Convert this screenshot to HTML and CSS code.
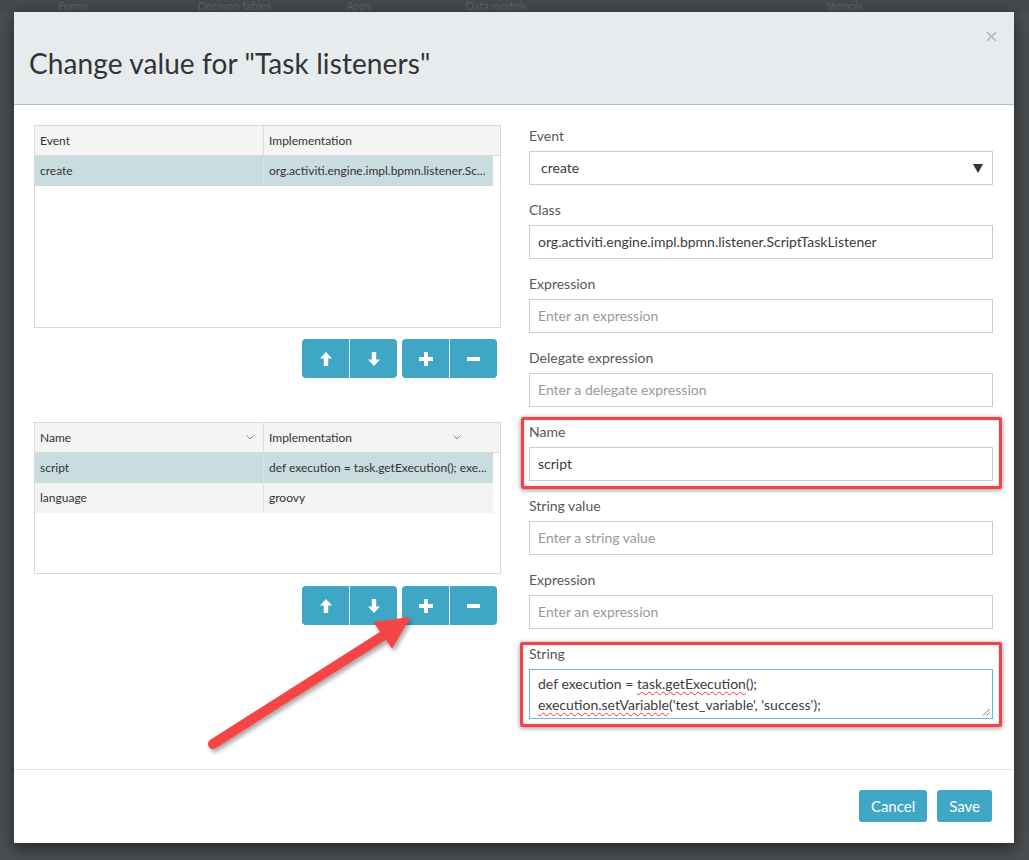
FILE: index.html
```html
<!DOCTYPE html>
<html>
<head>
<meta charset="utf-8">
<link rel="stylesheet" href="styles.css">
</head>
<body>
<div class="app">
  <nav class="topnav">
    <span class="nav-item nav-forms">Forms</span>
    <span class="nav-item nav-dec">Decision tables</span>
    <span class="nav-item nav-apps">Apps</span>
    <span class="nav-item nav-data">Data models</span>
    <span class="nav-item nav-sten">Stencils</span>
  </nav>
</div>

<div class="modal">
  <header class="modal-header">
    <h1 class="modal-title">Change value for "Task listeners"</h1>
    <svg class="close" width="11" height="11" viewBox="0 0 11 11"><path d="M1 1 L10 10 M10 1 L1 10" stroke="#b3b7ba" stroke-width="1.6" fill="none"/></svg>
  </header>

  <div class="modal-body">
    <div class="col-left">
      <div class="grid grid-top">
        <div class="grid-head">
          <div class="cell c1">Event</div>
          <div class="cell c2">Implementation</div>
        </div>
        <div class="grid-rows">
          <div class="grid-row selected">
            <div class="cell c1">create</div>
            <div class="cell c2">org.activiti.engine.impl.bpmn.listener.Sc...</div>
          </div>
        </div>
      </div>
      <div class="btn-row">
        <div class="btn-group">
          <button class="btn-icon"><svg width="12" height="14" viewBox="0 0 12 14"><path d="M6 0 L12 6.5 H8.2 V14 H3.8 V6.5 H0 Z" fill="#fff"/></svg></button>
          <button class="btn-icon"><svg width="12" height="14" viewBox="0 0 12 14"><path d="M6 14 L12 7.5 H8.2 V0 H3.8 V7.5 H0 Z" fill="#fff"/></svg></button>
        </div>
        <div class="btn-group">
          <button class="btn-icon"><svg width="14" height="14" viewBox="0 0 14 14"><path d="M5 0 H9 V5 H14 V9 H9 V14 H5 V9 H0 V5 H5 Z" fill="#fff"/></svg></button>
          <button class="btn-icon"><svg width="13" height="4" viewBox="0 0 13 4"><rect width="13" height="4" fill="#fff"/></svg></button>
        </div>
      </div>

      <div class="grid grid-bottom">
        <div class="grid-head">
          <div class="cell c1">Name<svg class="chev" width="8" height="5" viewBox="0 0 8 5"><path d="M0.5 0.5 L4 4 L7.5 0.5" stroke="#8a8a8a" fill="none"/></svg></div>
          <div class="cell c2">Implementation<svg class="chev chev2" width="8" height="5" viewBox="0 0 8 5"><path d="M0.5 0.5 L4 4 L7.5 0.5" stroke="#8a8a8a" fill="none"/></svg></div>
        </div>
        <div class="grid-rows">
          <div class="grid-row selected">
            <div class="cell c1">script</div>
            <div class="cell c2">def execution = task.getExecution(); exe...</div>
          </div>
          <div class="grid-row alt">
            <div class="cell c1">language</div>
            <div class="cell c2">groovy</div>
          </div>
        </div>
      </div>
      <div class="btn-row">
        <div class="btn-group">
          <button class="btn-icon"><svg width="12" height="14" viewBox="0 0 12 14"><path d="M6 0 L12 6.5 H8.2 V14 H3.8 V6.5 H0 Z" fill="#fff"/></svg></button>
          <button class="btn-icon"><svg width="12" height="14" viewBox="0 0 12 14"><path d="M6 14 L12 7.5 H8.2 V0 H3.8 V7.5 H0 Z" fill="#fff"/></svg></button>
        </div>
        <div class="btn-group">
          <button class="btn-icon"><svg width="14" height="14" viewBox="0 0 14 14"><path d="M5 0 H9 V5 H14 V9 H9 V14 H5 V9 H0 V5 H5 Z" fill="#fff"/></svg></button>
          <button class="btn-icon"><svg width="13" height="4" viewBox="0 0 13 4"><rect width="13" height="4" fill="#fff"/></svg></button>
        </div>
      </div>
    </div>

    <div class="col-right">
      <div class="field">
        <label class="label">Event</label>
        <div class="input select"><span>create</span><svg width="10" height="9" viewBox="0 0 10 9"><path d="M0 0 H10 L5 9 Z" fill="#333"/></svg></div>
      </div>
      <div class="field">
        <label class="label">Class</label>
        <div class="input">org.activiti.engine.impl.bpmn.listener.ScriptTaskListener</div>
      </div>
      <div class="field">
        <label class="label">Expression</label>
        <div class="input placeholder">Enter an expression</div>
      </div>
      <div class="field">
        <label class="label">Delegate expression</label>
        <div class="input placeholder">Enter a delegate expression</div>
      </div>
      <div class="field mark mark-name">
        <label class="label">Name</label>
        <div class="input">script</div>
      </div>
      <div class="field">
        <label class="label">String value</label>
        <div class="input placeholder">Enter a string value</div>
      </div>
      <div class="field">
        <label class="label">Expression</label>
        <div class="input placeholder">Enter an expression</div>
      </div>
      <div class="field mark mark-string">
        <label class="label">String</label>
        <div class="textarea">
          <div>def execution = <span class="spell">task.getExecution</span>();</div>
          <div><span class="spell">execution.setVariable</span>('test_variable', 'success');</div>
          <svg class="grip" width="8" height="8" viewBox="0 0 8 8"><path d="M7.5 1 L1 7.5 M7.5 4.5 L4.5 7.5" stroke="#777" stroke-width="1" fill="none"/></svg>
        </div>
      </div>
    </div>
  </div>

  <footer class="modal-footer">
    <button class="btn">Cancel</button>
    <button class="btn">Save</button>
  </footer>
</div>

<svg class="arrow" width="1029" height="860" viewBox="0 0 1029 860">
  <defs>
    <filter id="sh" x="-20%" y="-20%" width="140%" height="140%">
      <feDropShadow dx="2" dy="3" stdDeviation="2" flood-color="#000" flood-opacity="0.35"/>
    </filter>
  </defs>
  <g filter="url(#sh)">
    <line x1="213" y1="744" x2="386" y2="634" stroke="#f44546" stroke-width="10" stroke-linecap="round"/>
    <path d="M409 618 L375 623 L392 647 Z" fill="#f44546" stroke="#f44546" stroke-width="2" stroke-linejoin="round"/>
  </g>
</svg>
</body>
</html>
```

FILE: styles.css
```css
* { box-sizing: border-box; }

html, body {
  margin: 0;
  padding: 0;
  width: 1029px;
  height: 860px;
  overflow: hidden;
}

body {
  background: #4a4d4f;
  font-family: Lato, "Open Sans", sans-serif;
  color: #333;
  position: relative;
}

.app {
  height: 860px;
  background: #4b4e50;
}

.topnav {
  height: 12px;
  display: flex;
  align-items: center;
  background: #44494b;
  font-size: 11px;
  color: #5c6164;
  line-height: 12px;
}

.nav-item { display: block; }
.nav-forms { margin-left: 58px; }
.nav-dec { margin-left: 110px; }
.nav-apps { margin-left: 75px; }
.nav-data { margin-left: 95px; }
.nav-sten { margin-left: 300px; }

/* Modal overlay */
.modal {
  position: absolute;
  left: 14px;
  top: 12px;
  width: 1000px;
  height: 831px;
  background: #fff;
  box-shadow: 0 5px 15px rgba(0, 0, 0, 0.55);
  display: flex;
  flex-direction: column;
}

.modal-header {
  position: relative;
  background: #e6ebee;
  border-bottom: 1px solid #b7bec2;
  height: 93px;
  padding: 36px 15px 0 15px;
}

.modal-title {
  margin: 0;
  font-size: 28px;
  font-weight: 400;
  line-height: 31px;
  color: #333;
  letter-spacing: 0.1px;
}

.close {
  position: absolute;
  right: 17px;
  top: 19px;
}

.modal-body {
  flex: 1;
  display: grid;
  grid-template-columns: 467px 464px;
  column-gap: 28px;
  align-items: start;
  padding: 20px 21px 0 20px;
}

.col-right { padding-top: 1px; }

/* Left grids */
.grid {
  border: 1px solid #d9d9d9;
  background: #fff;
  font-size: 12px;
  color: #333;
}

.grid-top { height: 203px; }
.grid-bottom { height: 152px; margin-top: 44px; }

.grid-head {
  display: flex;
  height: 30px;
  background: #f4f4f4;
  border-bottom: 1px solid #dcdcdc;
}

.grid-head .cell { line-height: 29px; position: relative; }
.grid-head .c1 { border-right: 1px solid #dcdcdc; }

.grid-rows { padding-right: 7px; }

.grid-row {
  display: flex;
  height: 30px;
}

.grid-row .cell { line-height: 30px; }

.grid-row.selected { background: #c9dce0; }
.grid-row.selected .c1 { border-right: 1px solid #d3e3e6; }
.grid-row.alt { background: #f3f3f3; }
.grid-row.alt .c1 { border-right: 1px solid #e3e3e3; }

.cell {
  padding-left: 5px;
  white-space: nowrap;
  overflow: hidden;
}

.c1 { width: 229px; flex: none; }
.c2 { flex: 1; }

.chev {
  position: absolute;
  right: 9px;
  top: 12px;
}

.chev2 { right: 39px; }

.btn-row {
  display: flex;
  justify-content: flex-end;
  gap: 5px;
  margin-top: 11px;
  padding-right: 4px;
}

.grid-bottom + .btn-row { margin-top: 12px; }

.btn-group {
  display: flex;
  border-radius: 4px;
  overflow: hidden;
}

.btn-icon {
  width: 47px;
  height: 39px;
  border: 0;
  padding: 0;
  margin: 0;
  background: #3fa6c3;
  display: flex;
  align-items: center;
  justify-content: center;
}

.btn-icon + .btn-icon { border-left: 1px solid #e8f4f7; width: 48px; }

/* Right form */
.field {
  margin-bottom: 15px;
  position: relative;
}

.label {
  display: block;
  font-size: 14px;
  line-height: 20px;
  color: #585858;
  margin-bottom: 5px;
}

.input {
  height: 34px;
  border: 1px solid #ccc;
  padding: 0 8px;
  font-size: 14px;
  line-height: 32px;
  color: #3c3c3c;
  white-space: nowrap;
  overflow: hidden;
}

.input.placeholder { color: #999; }

.select {
  display: flex;
  align-items: center;
  justify-content: space-between;
  padding: 0 9px 0 11px;
}

.textarea {
  position: relative;
  height: 50px;
  border: 1px solid #79b3e4;
  padding: 3px 8px;
  font-size: 14px;
  line-height: 21px;
  color: #3c3c3c;
}

.spell {
  text-decoration: underline wavy #e0383d;
  text-decoration-thickness: 1px;
  text-underline-offset: 2px;
  text-decoration-skip-ink: none;
}

.grip {
  position: absolute;
  right: 2px;
  bottom: 2px;
}

/* Annotation highlight boxes */
.mark::after {
  content: "";
  position: absolute;
  border: 3px solid #f2424b;
  border-radius: 2px;
  box-shadow: 0 1px 5px rgba(0, 0, 0, 0.45), inset 0 0 3px rgba(0, 0, 0, 0.2);
  pointer-events: none;
}

.mark-name::after { top: -5px; bottom: -8px; left: -8px; right: -9px; }
.mark-string::after { top: -2px; bottom: -8px; left: -9px; right: -9px; }
.mark-string { margin-bottom: 0; }

/* Footer */
.modal-footer {
  border-top: 1px solid #e5e5e5;
  height: 74px;
  display: flex;
  justify-content: flex-end;
  align-items: flex-start;
  gap: 10px;
  padding: 20px 22px 0 0;
}

.btn {
  height: 32px;
  border: 0;
  border-radius: 3px;
  background: #3fa6c3;
  color: #fff;
  font-family: Lato, "Open Sans", sans-serif;
  font-size: 15px;
  padding: 0 12px;
  line-height: 32px;
}

.arrow {
  position: absolute;
  left: 0;
  top: 0;
  pointer-events: none;
}
```
